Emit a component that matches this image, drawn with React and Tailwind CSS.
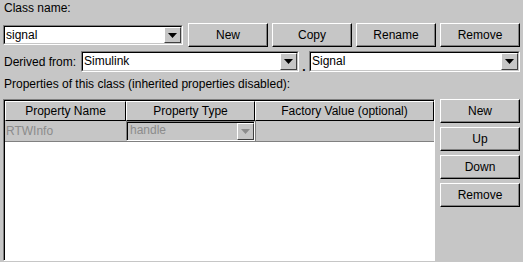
import React from 'react';

const Arrow = ({ disabled }) => (
  <div className="w-[17px] h-full flex items-center justify-center bg-[#c6c6c6] border border-t-white border-l-white border-b-[#404040] border-r-[#404040] shrink-0">
    <svg width="9" height="5" viewBox="0 0 9 5">
      <path d="M0 0H9L4.5 5Z" fill={disabled ? '#8c8c8c' : '#000'} />
    </svg>
  </div>
);

const Combo = ({ value, className }) => (
  <div className={`flex border border-t-[#808080] border-l-[#808080] border-b-white border-r-white ${className}`}>
    <div className="flex flex-1 bg-white border border-t-black border-l-black border-b-[#c6c6c6] border-r-[#c6c6c6]">
      <span className="flex-1 pl-[1px] leading-[16px] text-black">{value}</span>
      <Arrow />
    </div>
  </div>
);

const Button = ({ label, className }) => (
  <button className={`bg-[#c6c6c6] border border-t-white border-l-white border-b-black border-r-black shadow-[inset_-1px_-1px_0_#808080] text-black text-[12px] ${className}`}>
    {label}
  </button>
);

const HeaderCell = ({ label, className }) => (
  <div className={`h-[20px] flex items-center justify-center bg-[#c6c6c6] border border-t-white border-l-white border-b-black border-r-black ${className}`}>
    {label}
  </div>
);

export default function App() {
  return (
    <div
      className="w-[523px] h-[262px] bg-[#c6c6c6] text-[12px] text-black overflow-hidden flex flex-col"
      style={{ fontFamily: '"Liberation Sans", Arial, sans-serif' }}
    >
      <div className="pl-[4px] pt-[1px] h-[23px] leading-[14px]">Class name:</div>

      <div className="flex items-center pl-[3px] h-[24px]">
        <Combo value="signal" className="w-[180px] h-[20px]" />
        <div className="flex gap-[4px] ml-[5px]">
          <Button label="New" className="w-[80px] h-[24px]" />
          <Button label="Copy" className="w-[80px] h-[24px]" />
          <Button label="Rename" className="w-[80px] h-[24px]" />
          <Button label="Remove" className="w-[80px] h-[24px]" />
        </div>
      </div>

      <div className="flex items-center pl-[4px] mt-[4px] h-[21px]">
        <span className="w-[77px]">Derived from:</span>
        <Combo value="Simulink" className="w-[218px] h-[21px]" />
        <span className="w-[10px] self-end text-center leading-[10px] font-bold">.</span>
        <Combo value="Signal" className="w-[211px] h-[21px]" />
      </div>

      <div className="pl-[4px] mt-[5px] h-[22px] leading-[14px]">Properties of this class (inherited properties disabled):</div>

      <div className="flex flex-1">
        <div className="ml-[3px] w-[432px] h-[162px] flex flex-col border border-t-[#808080] border-l-[#808080] border-b-white border-r-white">
          <div className="flex-1 flex flex-col bg-white border-t border-l border-t-black border-l-black">
            <div className="flex">
              <HeaderCell label="Property Name" className="w-[121px]" />
              <HeaderCell label="Property Type" className="w-[129px]" />
              <HeaderCell label="Factory Value (optional)" className="w-[179px]" />
            </div>
            <div className="flex h-[21px] w-[429px] bg-[#c6c6c6] border-b border-[#808080]">
              <div className="w-[121px] pl-[1px] leading-[20px] text-[#8c8c8c]">RTWInfo</div>
              <div className="w-[129px] flex border border-t-[#808080] border-l-[#808080] border-b-white border-r-white">
                <div className="flex flex-1 border-t border-l border-t-black border-l-black">
                  <span className="flex-1 pl-[2px] leading-[14px] text-[#8c8c8c]">handle</span>
                  <Arrow disabled />
                </div>
              </div>
              <div className="flex-1 border-l border-[#808080]"></div>
            </div>
          </div>
        </div>

        <div className="ml-[5px] flex flex-col gap-[4px]">
          <Button label="New" className="w-[80px] h-[24px]" />
          <Button label="Up" className="w-[80px] h-[24px]" />
          <Button label="Down" className="w-[80px] h-[24px]" />
          <Button label="Remove" className="w-[80px] h-[24px]" />
        </div>
      </div>
    </div>
  );
}
